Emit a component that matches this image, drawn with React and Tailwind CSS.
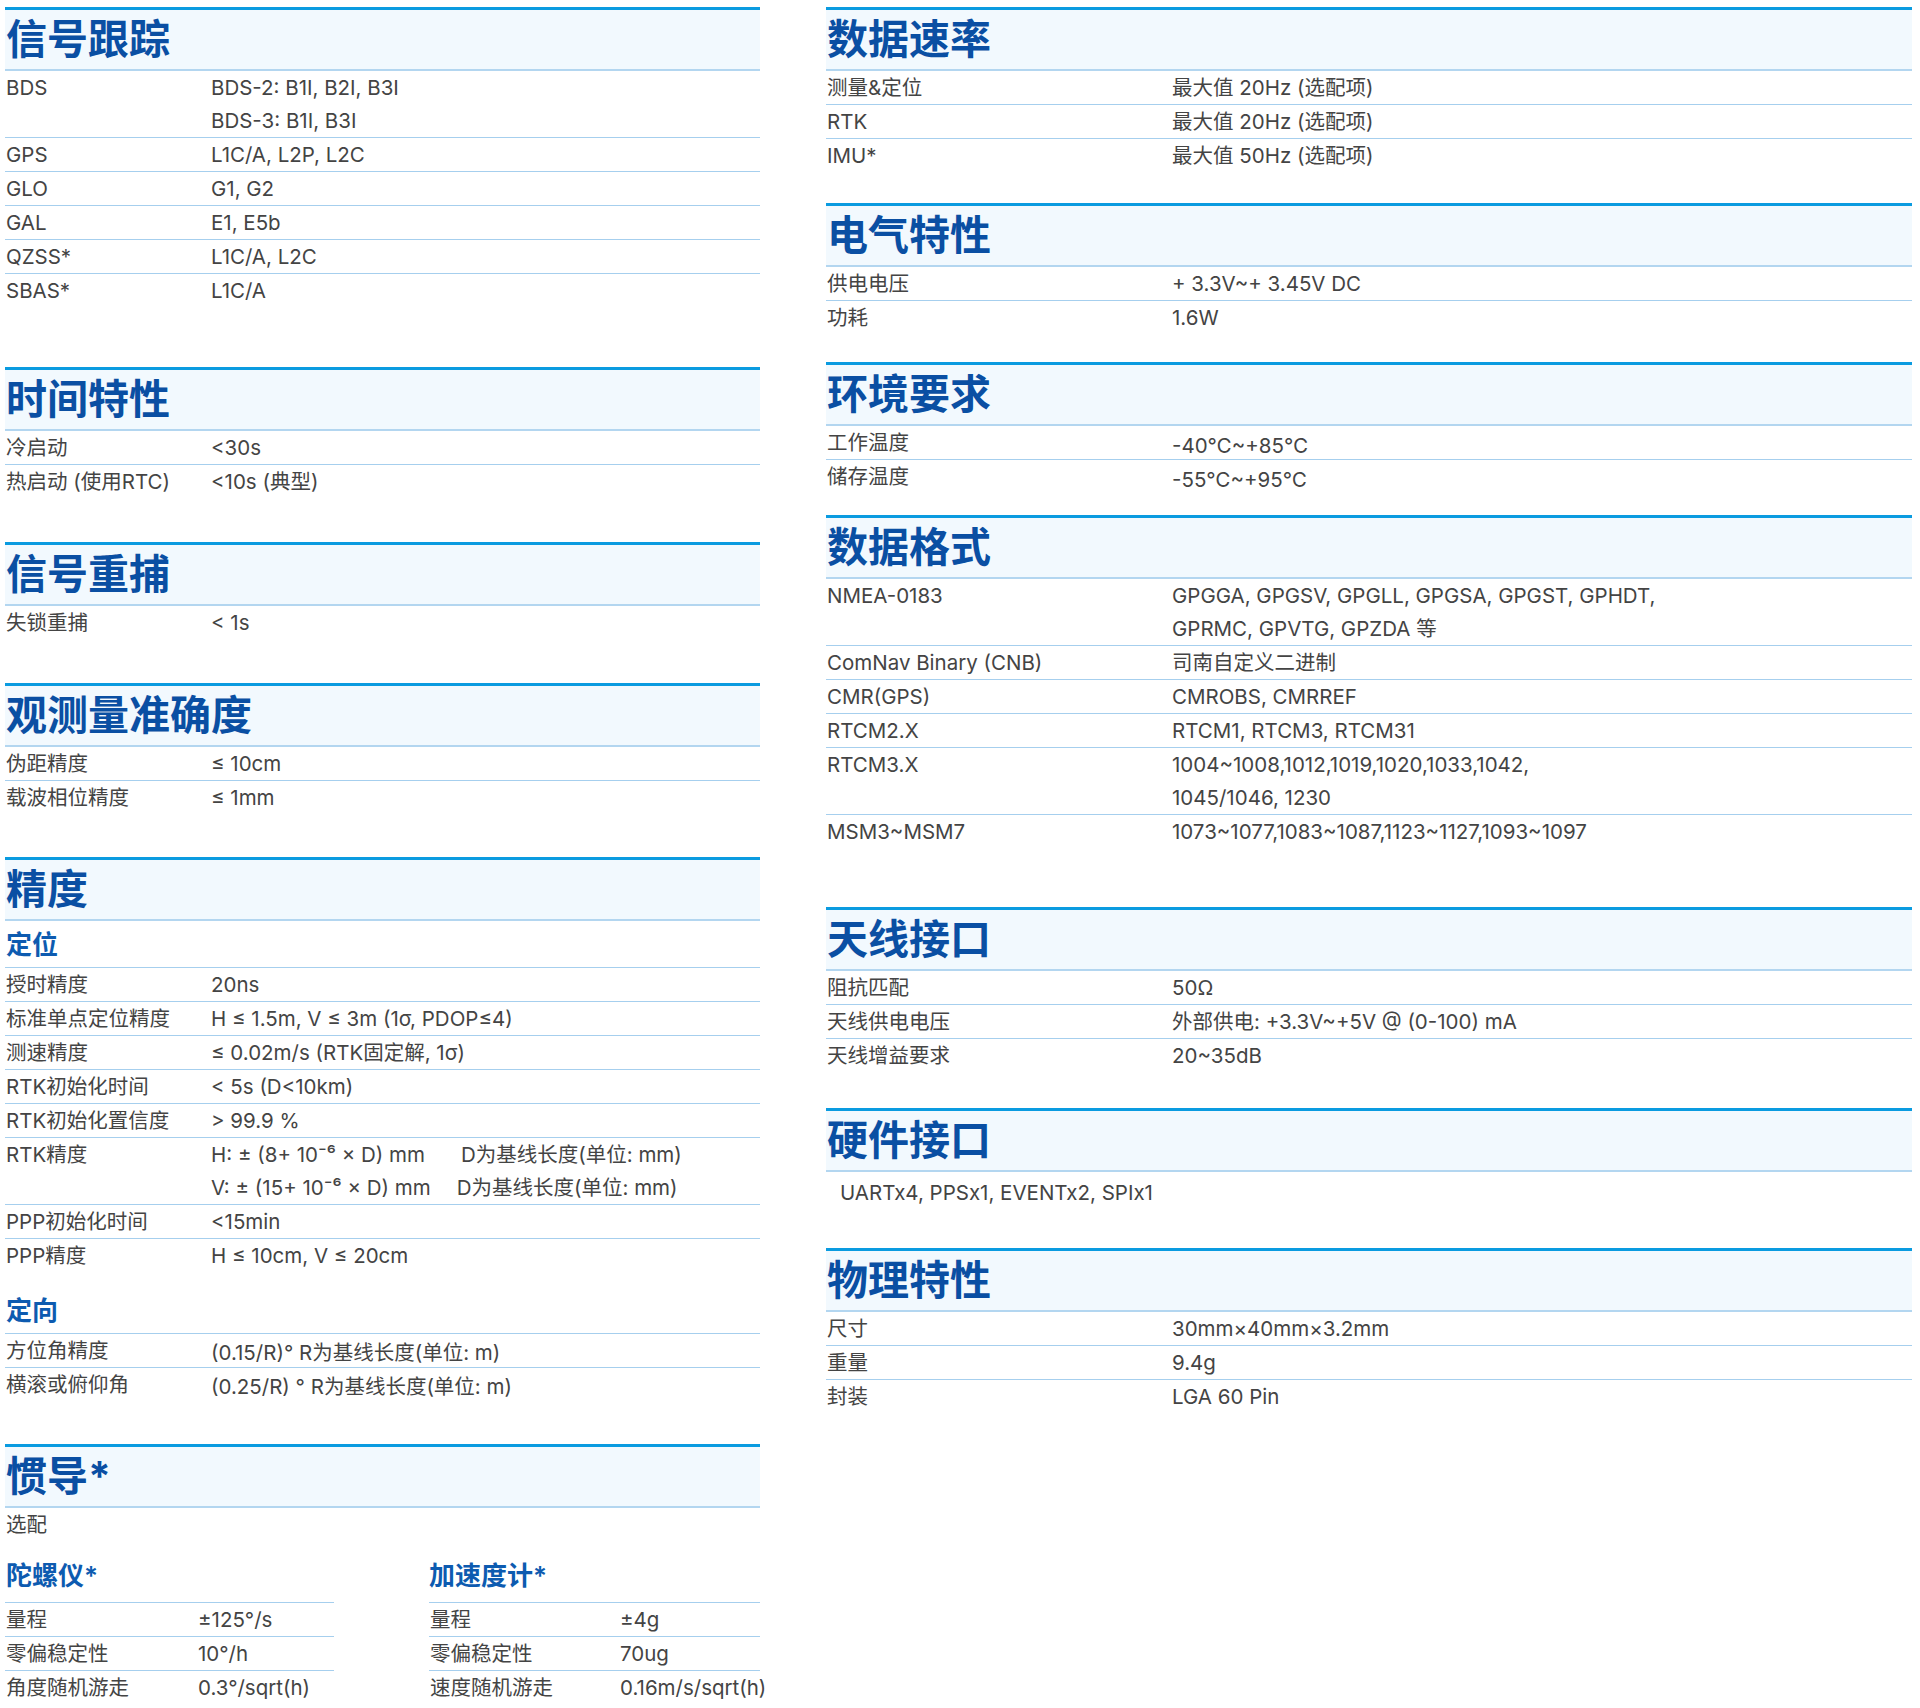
import React from "react";

function Header({ title }) {
  return (
    <div className="h-[64px] border-t-[3px] border-t-[#0a9be0] border-b-2 border-b-[#b3d6f0] bg-[#f2f9fe] flex items-center">
      <h2 className="pl-px text-[41px] leading-none font-bold text-[#0a4fa3]">{title}</h2>
    </div>
  );
}

function Row({ label, lines, labelW, last, valueClass = "" }) {
  return (
    <div className={"flex leading-[33px] " + (last ? "" : "border-b border-[#a6cfee]")}>
      <div className={"shrink-0 pl-px " + labelW}>{label}</div>
      <div className={"whitespace-nowrap " + valueClass}>
        {lines.map((l, i) => (
          <div key={i}>{l}</div>
        ))}
      </div>
    </div>
  );
}

function Rows({ items, labelW }) {
  return items.map((it, i) => (
    <Row
      key={i}
      label={it[0]}
      lines={Array.isArray(it[1]) ? it[1] : [it[1]]}
      labelW={labelW}
      last={i === items.length - 1}
      valueClass={it[2]}
    />
  ));
}

function SubHead({ children, className = "" }) {
  return (
    <div className={"h-[47px] border-b border-[#a6cfee] flex items-center pl-px text-[26px] font-semibold text-[#0d5bb0] " + className}>
      {children}
    </div>
  );
}

const L = "w-[206px]";
const R = "w-[346px]";

function LeftColumn() {
  return (
    <div className="w-[755px] shrink-0">
      <section>
        <Header title="信号跟踪" />
        <Rows
          labelW={L}
          items={[
            ["BDS", ["BDS-2: B1I, B2I, B3I", "BDS-3: B1I, B3I"]],
            ["GPS", "L1C/A, L2P, L2C"],
            ["GLO", "G1, G2"],
            ["GAL", "E1, E5b"],
            ["QZSS*", "L1C/A, L2C"],
            ["SBAS*", "L1C/A"],
          ]}
        />
      </section>

      <section className="mt-[60px]">
        <Header title="时间特性" />
        <Rows
          labelW={L}
          items={[
            ["冷启动", "<30s"],
            ["热启动 (使用RTC)", "<10s (典型)"],
          ]}
        />
      </section>

      <section className="mt-[44px]">
        <Header title="信号重捕" />
        <Rows labelW={L} items={[["失锁重捕", "< 1s"]]} />
      </section>

      <section className="mt-[44px]">
        <Header title="观测量准确度" />
        <Rows
          labelW={L}
          items={[
            ["伪距精度", "≤ 10cm"],
            ["载波相位精度", "≤ 1mm"],
          ]}
        />
      </section>

      <section className="mt-[43px]">
        <Header title="精度" />
        <SubHead>定位</SubHead>
        <Rows
          labelW={L}
          items={[
            ["授时精度", "20ns"],
            ["标准单点定位精度", "H ≤ 1.5m, V ≤ 3m (1σ, PDOP≤4)"],
            ["测速精度", "≤ 0.02m/s (RTK固定解, 1σ)"],
            ["RTK初始化时间", "< 5s (D<10km)"],
            ["RTK初始化置信度", "> 99.9 %"],
            [
              "RTK精度",
              [
                <span>
                  H: ± (8+ 10⁻⁶ × D) mm<span className="ml-[36px]">D为基线长度(单位: mm)</span>
                </span>,
                <span>
                  V: ± (15+ 10⁻⁶ × D) mm<span className="ml-[26px]">D为基线长度(单位: mm)</span>
                </span>,
              ],
            ],
            ["PPP初始化时间", "<15min"],
            ["PPP精度", "H ≤ 10cm, V ≤ 20cm"],
          ]}
        />
        <SubHead className="mt-[15px] h-[46px]">定向</SubHead>
        <Rows
          labelW={L}
          items={[
            ["方位角精度", "(0.15/R)°  R为基线长度(单位: m)", "pt-[4px] leading-[29px]"],
            ["横滚或俯仰角", "(0.25/R) ° R为基线长度(单位: m)", "pt-[4px] leading-[29px]"],
          ]}
        />
      </section>

      <section className="mt-[43px]">
        <Header title="惯导*" />
        <div className="leading-[33px] pl-px">选配</div>
        <div className="flex gap-[95px]">
          <div className="w-[331px]">
            <div className="h-[62px] pt-[8px] border-b border-[#a6cfee] flex items-center pl-px text-[26px] font-semibold text-[#0d5bb0]">
              陀螺仪*
            </div>
            <Rows
              labelW="w-[193px]"
              items={[
                ["量程", "±125°/s"],
                ["零偏稳定性", "10°/h"],
                ["角度随机游走", "0.3°/sqrt(h)"],
              ]}
            />
          </div>
          <div className="w-[331px]">
            <div className="h-[62px] pt-[8px] border-b border-[#a6cfee] flex items-center text-[26px] font-semibold text-[#0d5bb0]">
              加速度计*
            </div>
            <Rows
              labelW="w-[191px]"
              items={[
                ["量程", "±4g"],
                ["零偏稳定性", "70ug"],
                ["速度随机游走", "0.16m/s/sqrt(h)"],
              ]}
            />
          </div>
        </div>
      </section>
    </div>
  );
}

function RightColumn() {
  return (
    <div className="w-[1086px] shrink-0">
      <section>
        <Header title="数据速率" />
        <Rows
          labelW={R}
          items={[
            ["测量&定位", "最大值 20Hz (选配项)"],
            ["RTK", "最大值 20Hz (选配项)"],
            ["IMU*", "最大值 50Hz (选配项)"],
          ]}
        />
      </section>

      <section className="mt-[31px]">
        <Header title="电气特性" />
        <Rows
          labelW={R}
          items={[
            ["供电电压", "+ 3.3V~+ 3.45V DC"],
            ["功耗", "1.6W"],
          ]}
        />
      </section>

      <section className="mt-[28px]">
        <Header title="环境要求" />
        <Rows
          labelW={R}
          items={[
            ["工作温度", "-40℃~+85℃", "pt-[7px] leading-[26px]"],
            ["储存温度", "-55℃~+95℃", "pt-[7px] leading-[26px]"],
          ]}
        />
      </section>

      <section className="mt-[22px]">
        <Header title="数据格式" />
        <Rows
          labelW={R}
          items={[
            ["NMEA-0183", ["GPGGA, GPGSV, GPGLL, GPGSA, GPGST, GPHDT,", "GPRMC, GPVTG, GPZDA 等"]],
            ["ComNav Binary (CNB)", "司南自定义二进制"],
            ["CMR(GPS)", "CMROBS, CMRREF"],
            ["RTCM2.X", "RTCM1, RTCM3, RTCM31"],
            ["RTCM3.X", ["1004~1008,1012,1019,1020,1033,1042,", "1045/1046, 1230"]],
            ["MSM3~MSM7", "1073~1077,1083~1087,1123~1127,1093~1097"],
          ]}
        />
      </section>

      <section className="mt-[59px]">
        <Header title="天线接口" />
        <Rows
          labelW={R}
          items={[
            ["阻抗匹配", "50Ω"],
            ["天线供电电压", "外部供电: +3.3V~+5V @ (0-100) mA"],
            ["天线增益要求", "20~35dB"],
          ]}
        />
      </section>

      <section className="mt-[36px]">
        <Header title="硬件接口" />
        <div className="pt-[4px] pl-[14px] leading-[33px]">UARTx4, PPSx1, EVENTx2, SPIx1</div>
      </section>

      <section className="mt-[39px]">
        <Header title="物理特性" />
        <Rows
          labelW={R}
          items={[
            ["尺寸", "30mm×40mm×3.2mm"],
            ["重量", "9.4g"],
            ["封装", "LGA 60 Pin"],
          ]}
        />
      </section>
    </div>
  );
}

export default function App() {
  return (
    <div className="w-[1920px] h-[1708px] bg-white overflow-hidden font-['Inter','Noto_Sans_CJK_SC',sans-serif] text-[20.5px] text-[#444444]">
      <div className="flex pt-[7px] pl-[5px]">
        <LeftColumn />
        <div className="ml-[66px]">
          <RightColumn />
        </div>
      </div>
    </div>
  );
}
